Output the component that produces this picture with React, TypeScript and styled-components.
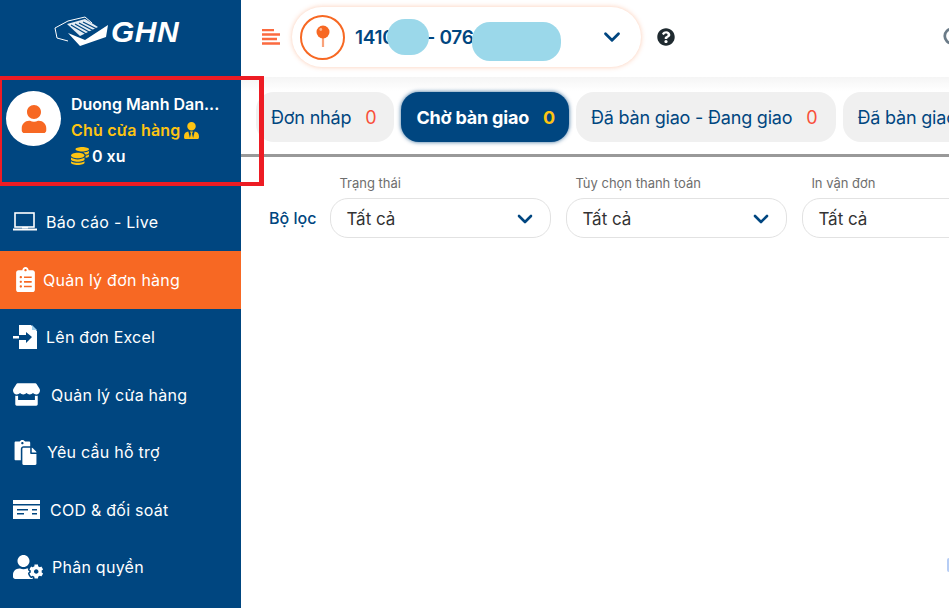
import React from 'react'
import styled, { createGlobalStyle } from 'styled-components'
import { FaUser, FaUserTie, FaCoins, FaClipboardList, FaStore, FaUserCog, FaPaste, FaQuestionCircle } from 'react-icons/fa'
import { ChevronDown, Search } from 'lucide-react'

const navy = '#004680'
const orange = '#f76823'
const yellow = '#fdc412'

const Global = createGlobalStyle`
	html, body { margin: 0; padding: 0; height: 100%; overflow: hidden; background: #fff; }
	body { font-family: Inter, "Noto Sans", sans-serif; }
`

const Page = styled.div`
	position: relative;
	display: flex;
	width: 949px;
	height: 608px;
	overflow: hidden;
`

const Sidebar = styled.aside`
	width: 241px;
	flex-shrink: 0;
	background: ${navy};
	color: #fff;
	display: flex;
	flex-direction: column;
`

const LogoBar = styled.div`
	height: 76px;
	box-sizing: border-box;
	padding: 14px 0 0 54px;
	display: flex;
	align-items: flex-start;
	gap: 1px;
`

const LogoText = styled.span`
	font-family: "Liberation Sans", sans-serif;
	font-size: 30px;
	line-height: 36px;
	font-weight: 700;
	font-style: italic;
	letter-spacing: 0.5px;
`

const UserBlock = styled.div`
	height: 117.5px;
	box-sizing: border-box;
	padding: 15px 0 0 6px;
	display: flex;
	gap: 10px;
`

const Avatar = styled.div`
	width: 55px;
	height: 55px;
	border-radius: 50%;
	background: #fff;
	color: ${orange};
	display: flex;
	align-items: center;
	justify-content: center;
	flex-shrink: 0;
`

const UserInfo = styled.div`
	display: flex;
	flex-direction: column;
	width: 160px;
`

const UserLine = styled.div`
	height: 26px;
	display: flex;
	align-items: center;
	gap: 3px;
	font-size: 16px;
	font-weight: 600;
	white-space: nowrap;
`

const UserRole = styled(UserLine)`
	color: ${yellow};
	letter-spacing: 0.2px;
`

const NavRow = styled.div<{ $active?: boolean }>`
	height: 57.5px;
	display: flex;
	align-items: center;
	padding-left: 13px;
	font-size: 16px;
	letter-spacing: 0.25px;
	background: ${p => (p.$active ? orange : 'transparent')};
	white-space: nowrap;
`

const NavIcon = styled.span<{ $width: number }>`
	width: ${p => p.$width}px;
	flex-shrink: 0;
	display: flex;
	align-items: center;
`

const Main = styled.main`
	flex: 1;
	min-width: 0;
	display: flex;
	flex-direction: column;
`

const TopBar = styled.header`
	height: 77px;
	flex-shrink: 0;
	display: flex;
	align-items: center;
	padding: 0 0 3px 21px;
	box-sizing: border-box;
	position: relative;
`

const AccountPill = styled.div`
	position: relative;
	margin-left: 12px;
	width: 349px;
	height: 60px;
	box-sizing: border-box;
	border-radius: 30px;
	background: #fff;
	box-shadow: 0 0 5px rgba(247, 104, 35, 0.35);
	display: flex;
	align-items: center;
	padding: 0 16px 0 8px;
	color: ${navy};
	font-size: 19px;
	font-weight: 600;
	letter-spacing: -0.3px;
`

const PinCircle = styled.div`
	width: 41px;
	height: 41px;
	border: 2px solid ${orange};
	border-radius: 50%;
	display: flex;
	align-items: center;
	justify-content: center;
	margin-right: 10px;
	flex-shrink: 0;
`

const AccountText = styled.span`
	flex: 1;
	display: flex;
	gap: 32px;
`

const Blob = styled.span<{ $left: number; $top: number; $w: number; $h: number }>`
	position: absolute;
	left: ${p => p.$left}px;
	top: ${p => p.$top}px;
	width: ${p => p.$w}px;
	height: ${p => p.$h}px;
	border-radius: 18px;
	background: #9bd8ea;
`

const HelpIcon = styled.span`
	margin-left: 16px;
	display: flex;
	color: #1f2a30;
`

const SearchButton = styled.span`
	position: absolute;
	left: 701px;
	top: 26px;
	display: flex;
	color: #6b7b88;
`

const TabsBar = styled.nav`
	height: 80px;
	flex-shrink: 0;
	box-sizing: border-box;
	border-bottom: 3px solid #999;
	background: linear-gradient(#f5f5f5, #fff 14px);
	padding: 15px 0 0 15px;
	display: flex;
	gap: 7px;
	overflow: hidden;
`

const Tab = styled.div<{ $active?: boolean }>`
	height: 50px;
	flex-shrink: 0;
	box-sizing: border-box;
	border-radius: 18px;
	padding: 0 ${p => (p.$active ? 14 : 18)}px 0 15px;
	display: flex;
	align-items: center;
	gap: 14px;
	font-size: 18px;
	letter-spacing: -0.2px;
	white-space: nowrap;
	color: ${p => (p.$active ? '#fff' : navy)};
	font-weight: ${p => (p.$active ? 700 : 400)};
	background: ${p => (p.$active ? navy : '#f0f0f0')};
	box-shadow: ${p => (p.$active ? '0 0 4px rgba(0, 70, 128, 0.8)' : 'none')};
`

const TabCount = styled.span<{ $active?: boolean }>`
	color: ${p => (p.$active ? yellow : '#f9503a')};
`

const Filters = styled.section`
	display: flex;
	align-items: flex-end;
	padding: 16px 0 0 28px;
	gap: 15px;
	overflow: hidden;
`

const FilterTitle = styled.div`
	width: 51px;
	margin-right: -1px;
	height: 40px;
	line-height: 40px;
	font-size: 16px;
	font-weight: 500;
	color: ${navy};
	white-space: nowrap;
`

const Field = styled.div`
	width: 221px;
	flex-shrink: 0;
`

const FieldLabel = styled.div`
	font-size: 13px;
	line-height: 20px;
	height: 25px;
	padding-left: 9px;
	color: #6e6e6e;
	white-space: nowrap;
`

const Select = styled.div`
	height: 40px;
	box-sizing: border-box;
	border: 1px solid #e2e2e2;
	border-radius: 18px;
	padding: 1px 13px 0 15px;
	display: flex;
	align-items: center;
	justify-content: space-between;
	font-size: 17px;
	color: #333;
`

const Annotation = styled.div`
	position: absolute;
	left: -1px;
	top: 76px;
	width: 265px;
	height: 110px;
	box-sizing: border-box;
	border: 4px solid #ed1c24;
	border-width: 4px 5px 4px 3px;
	pointer-events: none;
`

const EdgeMark = styled.div`
	position: absolute;
	left: 947px;
	top: 558px;
	width: 4px;
	height: 14px;
	border-radius: 2px;
	background: #b6cdf5;
`

const GhnMark = () => (
	<svg width="56" height="33" viewBox="0 0 56 33">
		<path d="M3 24 L1 14 L14 7 L31 3 L38 9 M3 24 L14 27" fill="none" stroke="#fff" strokeWidth="1" />
		<path d="M13 10 L31 5 L44 13 L26 22Z" fill="#e4ecf3" />
		<path d="M17 11 L34 21 M21 10 L37 19 M25 9 L40 17 M29 8 L43 15" stroke={navy} strokeWidth="1.2" />
		<path d="M14 19 L31 26 L54 11 L52 23 L26 32Z" fill="#fff" />
	</svg>
)

const Laptop = () => (
	<svg width="24" height="20" viewBox="0 0 24 20">
		<rect x="2" y="1" width="19" height="14" fill="none" stroke="#fff" strokeWidth="1.6" />
		<path d="M0 17.5 H24" stroke="#fff" strokeWidth="2" />
		<path d="M9 15 H15 V16.5 H9Z" fill="#fff" />
	</svg>
)

const FileArrow = () => (
	<svg width="25" height="24" viewBox="0 0 25 24">
		<path d="M6 0 H18 L24 6 V24 H6 V15 H13 V18 L19 12 L13 7 V10 H6Z" fill="#fff" />
		<path d="M19 0 L24 5 H19Z" fill="#9fd0ee" />
		<path d="M0 11 H6 V13.5 H0Z" fill="#fff" />
	</svg>
)

const Card = () => (
	<svg width="27" height="19" viewBox="0 0 27 19">
		<path d="M0 0 H27 V19 H0Z" fill="#fff" />
		<path d="M0 4 H27 V5.5 H0Z" fill={navy} />
		<path d="M4 9 H15 V10.5 H4Z M4 13 H11 V14.5 H4Z M19 9 H24 V10.5 H19Z M19 13 H24 V14.5 H19Z" fill={navy} />
	</svg>
)

const Pin = () => (
	<svg width="16" height="32" viewBox="0 0 16 32">
		<rect x="6.9" y="16" width="2.2" height="10" fill="#f9a27a" />
		<circle cx="8" cy="11" r="6.5" fill={orange} />
		<circle cx="5.8" cy="8.5" r="1.4" fill="#fbb592" />
	</svg>
)

const Burger = () => (
	<svg width="18" height="16" viewBox="0 0 18 16" style={{ flexShrink: 0 }}>
		<path d="M0 1 H12 M0 5.5 H18 M0 10 H15 M0 14.5 H18" stroke="#fb6a3f" strokeWidth="2.4" />
	</svg>
)

const navItems = [
	{ label: 'Báo cáo - Live', width: 33, icon: <Laptop /> },
	{ label: 'Quản lý đơn hàng', width: 30, icon: <FaClipboardList size={25} />, active: true },
	{ label: 'Lên đơn Excel', width: 33, icon: <FileArrow /> },
	{ label: 'Quản lý cửa hàng', width: 38, icon: <FaStore size={27} /> },
	{ label: 'Yêu cầu hỗ trợ', width: 34, icon: <FaPaste size={25} /> },
	{ label: 'COD & đối soát', width: 37, icon: <Card /> },
	{ label: 'Phân quyền', width: 39, icon: <FaUserCog size={30} /> },
]

const tabs = [
	{ label: 'Đơn nháp' },
	{ label: 'Chờ bàn giao', active: true },
	{ label: 'Đã bàn giao - Đang giao' },
	{ label: 'Đã bàn giao - Đang đối soát' },
]

const fields = ['Trạng thái', 'Tùy chọn thanh toán', 'In vận đơn']

export default function App() {
	return <>
		<Global />
		<Page>
			<Sidebar>
				<LogoBar>
					<GhnMark />
					<LogoText>GHN</LogoText>
				</LogoBar>
				<UserBlock>
					<Avatar><FaUser size={28} /></Avatar>
					<UserInfo>
						<UserLine>Duong Manh Dan...</UserLine>
						<UserRole>Chủ cửa hàng <FaUserTie size={17} /></UserRole>
						<UserLine><FaCoins size={18} color={yellow} /> 0 xu</UserLine>
					</UserInfo>
				</UserBlock>
				{navItems.map(item => (
					<NavRow key={item.label} $active={item.active}>
						<NavIcon $width={item.width}>{item.icon}</NavIcon>
						{item.label}
					</NavRow>
				))}
			</Sidebar>
			<Main>
				<TopBar>
					<Burger />
					<AccountPill>
						<PinCircle><Pin /></PinCircle>
						<AccountText><span>1410</span><span>- 076</span></AccountText>
						<Blob $left={95} $top={12} $w={42} $h={36} />
						<Blob $left={180} $top={15} $w={89} $h={39} />
						<ChevronDown size={26} strokeWidth={2.6} />
					</AccountPill>
					<HelpIcon><FaQuestionCircle size={18} /></HelpIcon>
					<SearchButton><Search size={22} strokeWidth={3} /></SearchButton>
				</TopBar>
				<TabsBar>
					{tabs.map(tab => (
						<Tab key={tab.label} $active={tab.active}>
							{tab.label}
							<TabCount $active={tab.active}>0</TabCount>
						</Tab>
					))}
				</TabsBar>
				<Filters>
					<FilterTitle>Bộ lọc</FilterTitle>
					{fields.map(field => (
						<Field key={field}>
							<FieldLabel>{field}</FieldLabel>
							<Select>
								Tất cả
								<ChevronDown size={24} strokeWidth={2.6} color={navy} />
							</Select>
						</Field>
					))}
				</Filters>
			</Main>
			<Annotation />
			<EdgeMark />
		</Page>
	</>
}
